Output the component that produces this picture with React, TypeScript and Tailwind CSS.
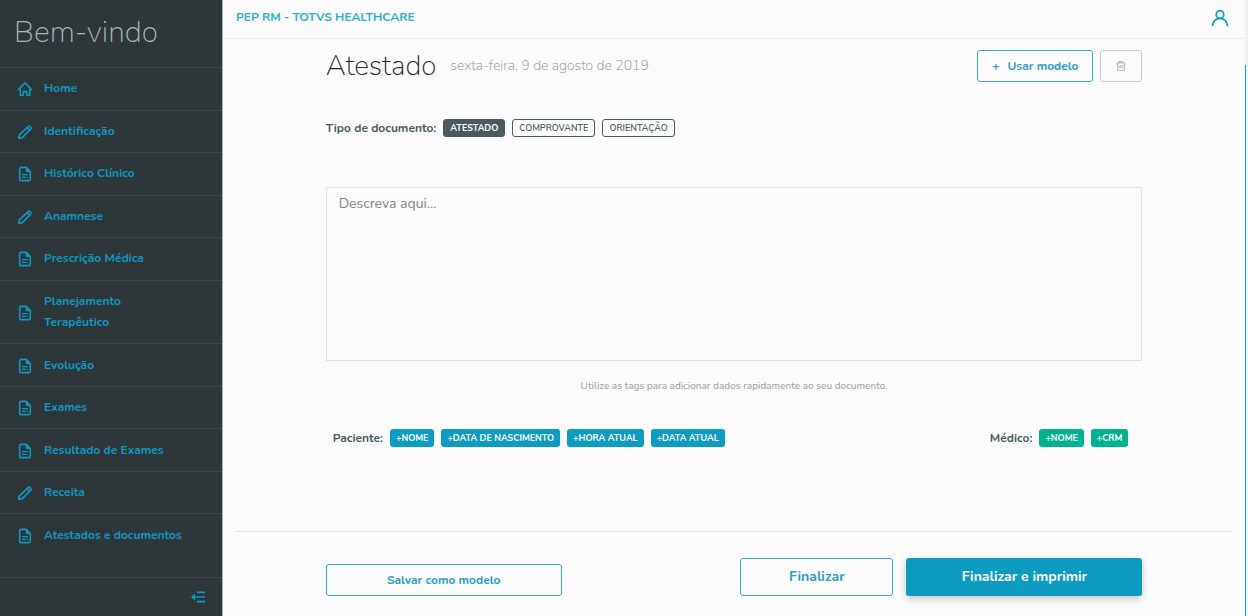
import { useState } from 'react';
import type { ReactNode } from 'react';
import { clsx } from 'clsx';

type IconName = 'home' | 'edit' | 'document';

interface MenuItem {
  label: string;
  icon: IconName;
}

const MENU: MenuItem[] = [
  { label: 'Home', icon: 'home' },
  { label: 'Identificação', icon: 'edit' },
  { label: 'Histórico Clínico', icon: 'document' },
  { label: 'Anamnese', icon: 'edit' },
  { label: 'Prescrição Médica', icon: 'document' },
  { label: 'Planejamento Terapêutico', icon: 'document' },
  { label: 'Evolução', icon: 'document' },
  { label: 'Exames', icon: 'document' },
  { label: 'Resultado de Exames', icon: 'document' },
  { label: 'Receita', icon: 'edit' },
  { label: 'Atestados e documentos', icon: 'document' },
];

const DOCUMENT_TYPES = ['ATESTADO', 'COMPROVANTE', 'ORIENTAÇÃO'];
const PATIENT_TAGS = ['+NOME', '+DATA DE NASCIMENTO', '+HORA ATUAL', '+DATA ATUAL'];
const DOCTOR_TAGS = ['+NOME', '+CRM'];

function MenuIcon({ name }: { name: IconName }) {
  return (
    <svg
      viewBox="0 0 16 16"
      className="mt-px h-4 w-4 shrink-0"
      fill="none"
      stroke="currentColor"
      strokeWidth="1.6"
      strokeLinecap="round"
      strokeLinejoin="round"
      aria-hidden="true"
    >
      {name === 'home' && (
        <path d="M3.3 8.6H1.6L8 1.8l6.4 6.8h-1.7v5.6H9.7v-3.6H6.3v3.6h-3z" />
      )}
      {name === 'edit' && (
        <>
          <path d="M1.7 14.2l.7-3.4 8.7-8.2c.6-.5 1.3-.5 1.8 0l.8.8c.5.5.5 1.2 0 1.8l-8.4 8.4z" />
          <path d="M10 3.8l2.3 2.3" />
        </>
      )}
      {name === 'document' && (
        <>
          <path d="M9.2 1.4H4.1c-.8 0-1.4.6-1.4 1.4v10.4c0 .8.6 1.4 1.4 1.4h7.8c.8 0 1.4-.6 1.4-1.4V5.6z" />
          <path d="M9.2 1.4v4.3h4.1z" fill="currentColor" strokeWidth="1" />
          <path d="M5.5 8.6h5M5.5 11.4h3M10.3 11.4h.3" strokeWidth="1.2" />
        </>
      )}
    </svg>
  );
}

function Sidebar() {
  return (
    <aside className="flex w-[223px] shrink-0 flex-col border-r border-[#aab0b0] bg-[#2d3739]">
      <h2 className="h-[67px] pl-[14px] pt-[13px] text-[30px] font-extralight leading-10 text-[#a9b5b4]">
        Bem-vindo
      </h2>
      <nav className="mb-[21px] flex grow flex-col">
        <ul className="flex grow flex-col">
          {MENU.map((item) => (
            <li key={item.label} className="flex grow border-t border-[#3a4547]">
              <a
                href="#"
                className="flex grow items-center gap-[11px] py-[10px] pl-[17px] pr-9 text-xs font-bold leading-[21px] text-[#1097c0]"
              >
                <MenuIcon name={item.icon} />
                <span className={clsx(item.label.startsWith('Planejamento') && 'w-24')}>
                  {item.label}
                </span>
              </a>
            </li>
          ))}
        </ul>
      </nav>
      <div className="flex h-[39px] items-center justify-end border-t border-[#3a4547] pr-4">
        <button type="button" aria-label="Recolher menu" className="text-[#0d9bc1]">
          <svg viewBox="0 0 16 14" className="h-[14px] w-4" fill="none" stroke="currentColor" strokeWidth="1.6">
            <path d="M7 2.4h8M2.5 7H15M7 11.6h8" />
            <path d="M1 7l4-3.4v6.8z" fill="currentColor" stroke="none" />
          </svg>
        </button>
      </div>
    </aside>
  );
}

function Tag({ className, children }: { className: string; children: ReactNode }) {
  return (
    <button
      type="button"
      className={clsx(
        'h-[18px] rounded-[3px] px-[6px] text-[9px] font-bold leading-4 text-white',
        className,
      )}
    >
      {children}
    </button>
  );
}

export default function App() {
  const [documentType, setDocumentType] = useState('ATESTADO');

  return (
    <div className="flex min-h-screen bg-[#fbfbfb] font-['Nunito','Lato',sans-serif] text-[#4a5c60]">
      <Sidebar />

      <div className="flex min-w-0 grow flex-col">
        <header className="flex h-[39px] items-center justify-between border-b border-[#ececec] pb-1 pl-[13px] pr-4">
          <h1 className="text-xs font-bold text-[#29b0c8]">PEP RM - TOTVS HEALTHCARE</h1>
          <button type="button" aria-label="Perfil do usuário" className="text-[#0d9bc1]">
            <svg
              viewBox="0 0 18 18"
              className="mt-px h-[18px] w-[18px]"
              fill="none"
              stroke="currentColor"
              strokeWidth="1.7"
              strokeLinecap="round"
            >
              <circle cx="9" cy="5.5" r="3.8" />
              <path d="M1.7 16.6c0-4.2 3.1-7.3 7.3-7.3s7.3 3.1 7.3 7.3" />
            </svg>
          </button>
        </header>

        <main className="flex grow flex-col px-[13px]">
          <div className="mx-auto flex w-[82%] grow flex-col">
            <div className="mt-[11px] flex items-center">
              <h2 className="text-[28px] font-extralight leading-8 text-[#22292b]">Atestado</h2>
              <span className="ml-[14px] text-sm font-extralight text-[#858c8f]">
                sexta-feira, 9 de agosto de 2019
              </span>
              <button
                type="button"
                className="ml-auto flex h-8 w-[116px] items-center justify-center gap-2 rounded-[3px] border border-[#36acc9] text-xs font-bold text-[#2b9cc3]"
              >
                <span>+</span> Usar modelo
              </button>
              <button
                type="button"
                aria-label="Excluir"
                className="ml-[7px] flex h-8 w-[42px] items-center justify-center rounded-[3px] border border-[#c5cbcb] text-[#b5bcbd]"
              >
                <svg viewBox="0 0 10 10" className="h-[10px] w-[10px]" fill="none" stroke="currentColor" strokeWidth="1.2">
                  <path d="M.5 2h9M3.2 2V.6h3.6V2M1.6 2v6.6c0 .5.4.9.9.9h5c.5 0 .9-.4.9-.9V2M4 4v3.6M6 4v3.6" />
                </svg>
              </button>
            </div>

            <div className="mt-[37px] flex items-center gap-[7px]">
              <span className="text-xs font-bold leading-[18px]">Tipo de documento:</span>
              {DOCUMENT_TYPES.map((type) => (
                <button
                  key={type}
                  type="button"
                  aria-pressed={type === documentType}
                  onClick={() => setDocumentType(type)}
                  className={clsx(
                    'h-[18px] rounded-[3px] border border-[#4a5c60] px-[6px] text-[9px] leading-4',
                    type === documentType ? 'bg-[#4a5c60] font-bold text-white' : 'bg-white font-semibold',
                  )}
                >
                  {type}
                </button>
              ))}
            </div>

            <textarea
              aria-label="Descrição do documento"
              placeholder="Descreva aqui..."
              className="mt-[50px] h-[174px] w-full resize-none border border-[#e1e3e3] px-3 py-1 text-sm leading-6 outline-none placeholder:text-[#7b8589]"
            />

            <p className="mt-4 text-center text-[10px] font-medium leading-[18px] text-[#a0a6a9]">
              Utilize as tags para adicionar dados rapidamente ao seu documento.
            </p>

            <div className="mb-10 mt-[34px] flex items-center justify-between pl-[7px] pr-[14px]">
              <div className="flex items-center gap-[7px]">
                <span className="text-xs font-bold leading-[18px]">Paciente:</span>
                {PATIENT_TAGS.map((tag) => (
                  <Tag key={tag} className="bg-[#0d9bc1]">{tag}</Tag>
                ))}
              </div>
              <div className="flex items-center gap-[7px]">
                <span className="text-xs font-bold leading-[18px]">Médico:</span>
                {DOCTOR_TAGS.map((tag) => (
                  <Tag key={tag} className="bg-[#00b28e]">{tag}</Tag>
                ))}
              </div>
            </div>
          </div>

          <footer className="border-t border-[#dfe2e2] pb-5 pt-[26px]">
            <div className="mx-auto flex w-[82%] items-end">
              <button
                type="button"
                className="h-8 w-[236px] rounded-[3px] border border-[#36acc9] text-xs font-bold text-[#2b9cc3]"
              >
                Salvar como modelo
              </button>
              <button
                type="button"
                className="ml-auto h-[38px] w-[153px] rounded-[3px] border border-[#36acc9] text-sm font-bold text-[#2b9cc3]"
              >
                Finalizar
              </button>
              <button
                type="button"
                className="ml-[13px] h-[38px] w-[236px] rounded-[3px] bg-[#0d9bc1] text-sm font-bold text-white shadow-[0_3px_7px_rgba(0,0,0,0.2)]"
              >
                Finalizar e imprimir
              </button>
            </div>
          </footer>
        </main>
      </div>

      {/* scroll rail */}
      <div className="w-[3px] shrink-0 bg-[#eef1f8] pt-[65px]">
        <div className="h-full border-l border-[#0d9bc1]" />
      </div>
    </div>
  );
}
